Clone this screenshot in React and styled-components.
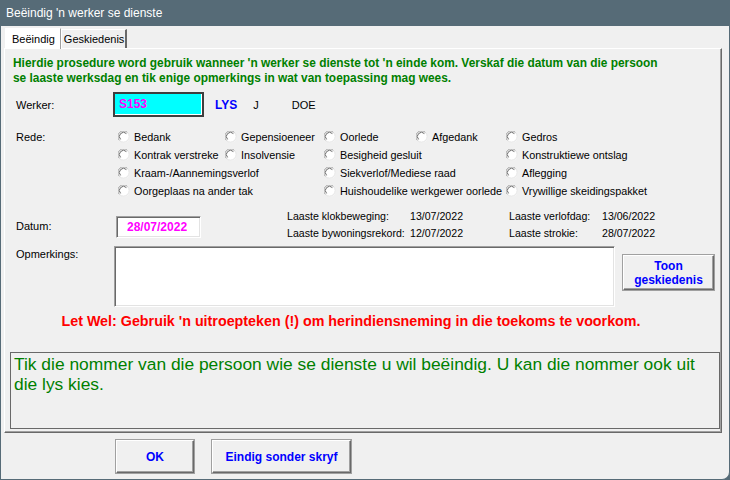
import React from 'react';
import styled, { createGlobalStyle } from 'styled-components';

const GlobalStyle = createGlobalStyle`
  html, body {
    margin: 0;
    padding: 0;
    background: #566b77;
  }
  body {
    font-family: "Liberation Sans", Arial, sans-serif;
    font-size: 11px;
    color: #000;
  }
`;

const Window = styled.div`
  width: 730px;
  height: 480px;
  box-sizing: border-box;
  display: flex;
  flex-direction: column;
  background: #f0f0f0;
  border: 1px solid #566b77;
  border-top: none;
  border-bottom-right-radius: 8px;
  overflow: hidden;
`;

const TitleBar = styled.div`
  height: 26px;
  flex: none;
  display: flex;
  align-items: center;
  padding-left: 6px;
  background: #566b77;
  color: #fff;
  font-size: 12px;
  margin: 0 -1px;
`;

const Body = styled.div`
  flex: 1;
  display: flex;
  flex-direction: column;
  padding: 1px 7px 0 3px;
`;

const TabStrip = styled.div`
  display: flex;
  align-items: flex-end;
  height: 21px;
  padding-left: 1px;
`;

const Tab = styled.div`
  box-sizing: border-box;
  height: ${p => (p.$active ? '21px' : '19px')};
  padding: ${p => (p.$active ? '4px 5px 0 6px' : '3px 1px 0 2px')};
  background: ${p => (p.$active ? '#fff' : '#f0f0f0')};
  border-top: 1px solid #fff;
  border-left: 1px solid #fff;
  border-right: ${p => (p.$active ? '1px solid #a0a0a0' : '2px solid #696969')};
  position: relative;
  z-index: ${p => (p.$active ? 2 : 1)};
  margin-bottom: ${p => (p.$active ? '-1px' : '0')};
  font-size: 11px;
  white-space: nowrap;
`;

const Panel = styled.div`
  box-sizing: border-box;
  height: 385px;
  display: flex;
  flex-direction: column;
  border-top: 1px solid #fff;
  border-left: 1px solid #fff;
  border-right: 1px solid #696969;
  border-bottom: 1px solid #696969;
  box-shadow: inset -1px -1px 0 #a0a0a0;
  padding: 7px 2px 3px 4px;
`;

const Intro = styled.p`
  margin: 0 0 6px 4px;
  color: #008000;
  font-weight: bold;
  font-size: 11.9px;
  line-height: 15px;
  white-space: nowrap;
`;

const FormRow = styled.div`
  display: flex;
  align-items: ${p => p.$align || 'center'};
  margin-top: ${p => p.$gap || 0}px;
  padding-left: 7px;
`;

const Label = styled.div`
  width: 100px;
  flex: none;
  padding-top: ${p => p.$top || 0}px;
`;

const CodeInput = styled.div`
  box-sizing: border-box;
  width: 91px;
  height: 25px;
  margin-left: -3px;
  border: 2px solid #3e3e3e;
  box-shadow: inset -1px -1px 0 #fff;
  background: #00ffff;
  color: #ff00ff;
  font-weight: bold;
  font-size: 12px;
  padding: 3px 0 0 4px;
`;

const LinkText = styled.span`
  color: #0000ff;
  font-weight: bold;
  font-size: 12px;
  margin-left: 11px;
`;

const NamePart = styled.span`
  font-size: 11px;
  margin-left: ${p => p.$left}px;
`;

const RadioGrid = styled.div`
  display: grid;
  grid-template-columns: 107px 99px 92px 90px auto;
  grid-auto-rows: 18px;
  margin-left: 2px;
`;

const RadioItem = styled.label`
  grid-column: ${p => p.$col} / span ${p => p.$span || 1};
  display: flex;
  align-items: center;
  gap: 4px;
  white-space: nowrap;
  font-size: 10.8px;
`;

const DateInput = styled.div`
  box-sizing: border-box;
  width: 85px;
  height: 22px;
  flex: none;
  background: #fff;
  border-top: 1px solid #a0a0a0;
  border-left: 1px solid #a0a0a0;
  border-right: 1px solid #fff;
  border-bottom: 1px solid #fff;
  box-shadow: inset 1px 1px 0 #696969, inset -1px -1px 0 #e3e3e3;
  color: #ff00ff;
  font-weight: bold;
  font-size: 12px;
  padding: 3px 0 0 10px;
`;

const InfoGrid = styled.div`
  display: grid;
  grid-template-columns: 123px 99px 93px auto;
  row-gap: 2px;
  margin-left: 86px;
  margin-top: -7px;
  font-size: 10.6px;
  line-height: 15px;
`;

const Remarks = styled.div`
  box-sizing: border-box;
  width: 501px;
  height: 61px;
  flex: none;
  margin-left: -2px;
  background: #fff;
  border-top: 1px solid #a0a0a0;
  border-left: 1px solid #a0a0a0;
  border-right: 1px solid #fff;
  border-bottom: 1px solid #fff;
  box-shadow: inset 1px 1px 0 #696969, inset -1px -1px 0 #e3e3e3;
`;

const RaisedButton = styled.button`
  box-sizing: border-box;
  width: ${p => p.$w}px;
  height: ${p => p.$h}px;
  flex: none;
  background: #f0f0f0;
  border-top: 1px solid #fff;
  border-left: 1px solid #fff;
  border-right: 1px solid #696969;
  border-bottom: 1px solid #696969;
  box-shadow: inset -1px -1px 0 #a0a0a0, 0 0 0 1px #a0a0a0;
  color: #0000ff;
  font-family: "Liberation Sans", Arial, sans-serif;
  font-weight: bold;
  font-size: 12px;
  line-height: 14px;
  padding: 0;
  margin-left: ${p => p.$left || 0}px;
  margin-top: ${p => p.$top || 0}px;
`;

const Warning = styled.div`
  margin-top: 6px;
  text-align: center;
  color: #ff0000;
  font-weight: bold;
  font-size: 14.3px;
  padding-right: 26px;
  white-space: nowrap;
`;

const MessageBox = styled.div`
  box-sizing: border-box;
  height: 77px;
  margin: 23px -1px 0 1px;
  border: 1px solid #696969;
  color: #008000;
  font-size: 17.4px;
  line-height: 20px;
  padding: 1px 6px 1px 3px;
`;

const ButtonBar = styled.div`
  display: flex;
  padding-top: 7px;
  padding-left: 112px;
  gap: 18px;
`;

const RadioDot = () => (
  <svg width="12" height="12" viewBox="0 0 12 12">
    <circle cx="6" cy="6" r="5.5" fill="#fff" />
    <path d="M1.5 9.5 A5 5 0 0 1 9.5 1.5" fill="none" stroke="#a0a0a0" strokeWidth="1" />
    <path d="M2.6 8.4 A3.8 3.8 0 0 1 8.4 2.6" fill="none" stroke="#696969" strokeWidth="1" />
    <path d="M9.5 1.5 A5 5 0 0 1 1.5 9.5" fill="none" stroke="#e3e3e3" strokeWidth="1" />
  </svg>
);

const reasons = [
  { text: 'Bedank', col: 1 },
  { text: 'Gepensioeneer', col: 2 },
  { text: 'Oorlede', col: 3 },
  { text: 'Afgedank', col: 4 },
  { text: 'Gedros', col: 5 },
  { text: 'Kontrak verstreke', col: 1 },
  { text: 'Insolvensie', col: 2 },
  { text: 'Besigheid gesluit', col: 3, span: 2 },
  { text: 'Konstruktiewe ontslag', col: 5 },
  { text: 'Kraam-/Aannemingsverlof', col: 1, span: 2 },
  { text: 'Siekverlof/Mediese raad', col: 3, span: 2 },
  { text: 'Aflegging', col: 5 },
  { text: 'Oorgeplaas na ander tak', col: 1, span: 2 },
  { text: 'Huishoudelike werkgewer oorlede', col: 3, span: 2 },
  { text: 'Vrywillige skeidingspakket', col: 5 },
];

export default function App() {
  return (
    <>
      <GlobalStyle />
      <Window>
        <TitleBar>Beëindig 'n werker se dienste</TitleBar>
        <Body>
          <TabStrip>
            <Tab $active>Beëindig</Tab>
            <Tab>Geskiedenis</Tab>
          </TabStrip>
          <Panel>
            <Intro>
              Hierdie prosedure word gebruik wanneer 'n werker se dienste tot 'n einde kom. Verskaf die datum van die persoon
              <br />
              se laaste werksdag en tik enige opmerkings in wat van toepassing mag wees.
            </Intro>

            <FormRow>
              <Label>Werker:</Label>
              <CodeInput>S153</CodeInput>
              <LinkText>LYS</LinkText>
              <NamePart $left={16}>J</NamePart>
              <NamePart $left={33}>DOE</NamePart>
            </FormRow>

            <FormRow $align="flex-start" $gap={11}>
              <Label $top={3}>Rede:</Label>
              <RadioGrid>
                {reasons.map(r => (
                  <RadioItem key={r.text} $col={r.col} $span={r.span}>
                    <RadioDot />
                    {r.text}
                  </RadioItem>
                ))}
              </RadioGrid>
            </FormRow>

            <FormRow $gap={16} $align="flex-start">
              <Label $top={4}>Datum:</Label>
              <DateInput>28/07/2022</DateInput>
              <InfoGrid>
                <span>Laaste klokbeweging:</span>
                <span>13/07/2022</span>
                <span>Laaste verlofdag:</span>
                <span>13/06/2022</span>
                <span>Laaste bywoningsrekord:</span>
                <span>12/07/2022</span>
                <span>Laaste strokie:</span>
                <span>28/07/2022</span>
              </InfoGrid>
            </FormRow>

            <FormRow $gap={5} $align="flex-start">
              <Label $top={2}>Opmerkings:</Label>
              <Remarks />
              <RaisedButton $w={91} $h={35} $left={8} $top={9}>
                Toon
                <br />
                geskiedenis
              </RaisedButton>
            </FormRow>

            <Warning>Let Wel: Gebruik 'n uitroepteken (!) om herindiensneming in die toekoms te voorkom.</Warning>

            <MessageBox>
              Tik die nommer van die persoon wie se dienste u wil beëindig. U kan die nommer ook uit die lys kies.
            </MessageBox>
          </Panel>
          <ButtonBar>
            <RaisedButton $w={78} $h={33}>OK</RaisedButton>
            <RaisedButton $w={139} $h={33}>Eindig sonder skryf</RaisedButton>
          </ButtonBar>
        </Body>
      </Window>
    </>
  );
}
